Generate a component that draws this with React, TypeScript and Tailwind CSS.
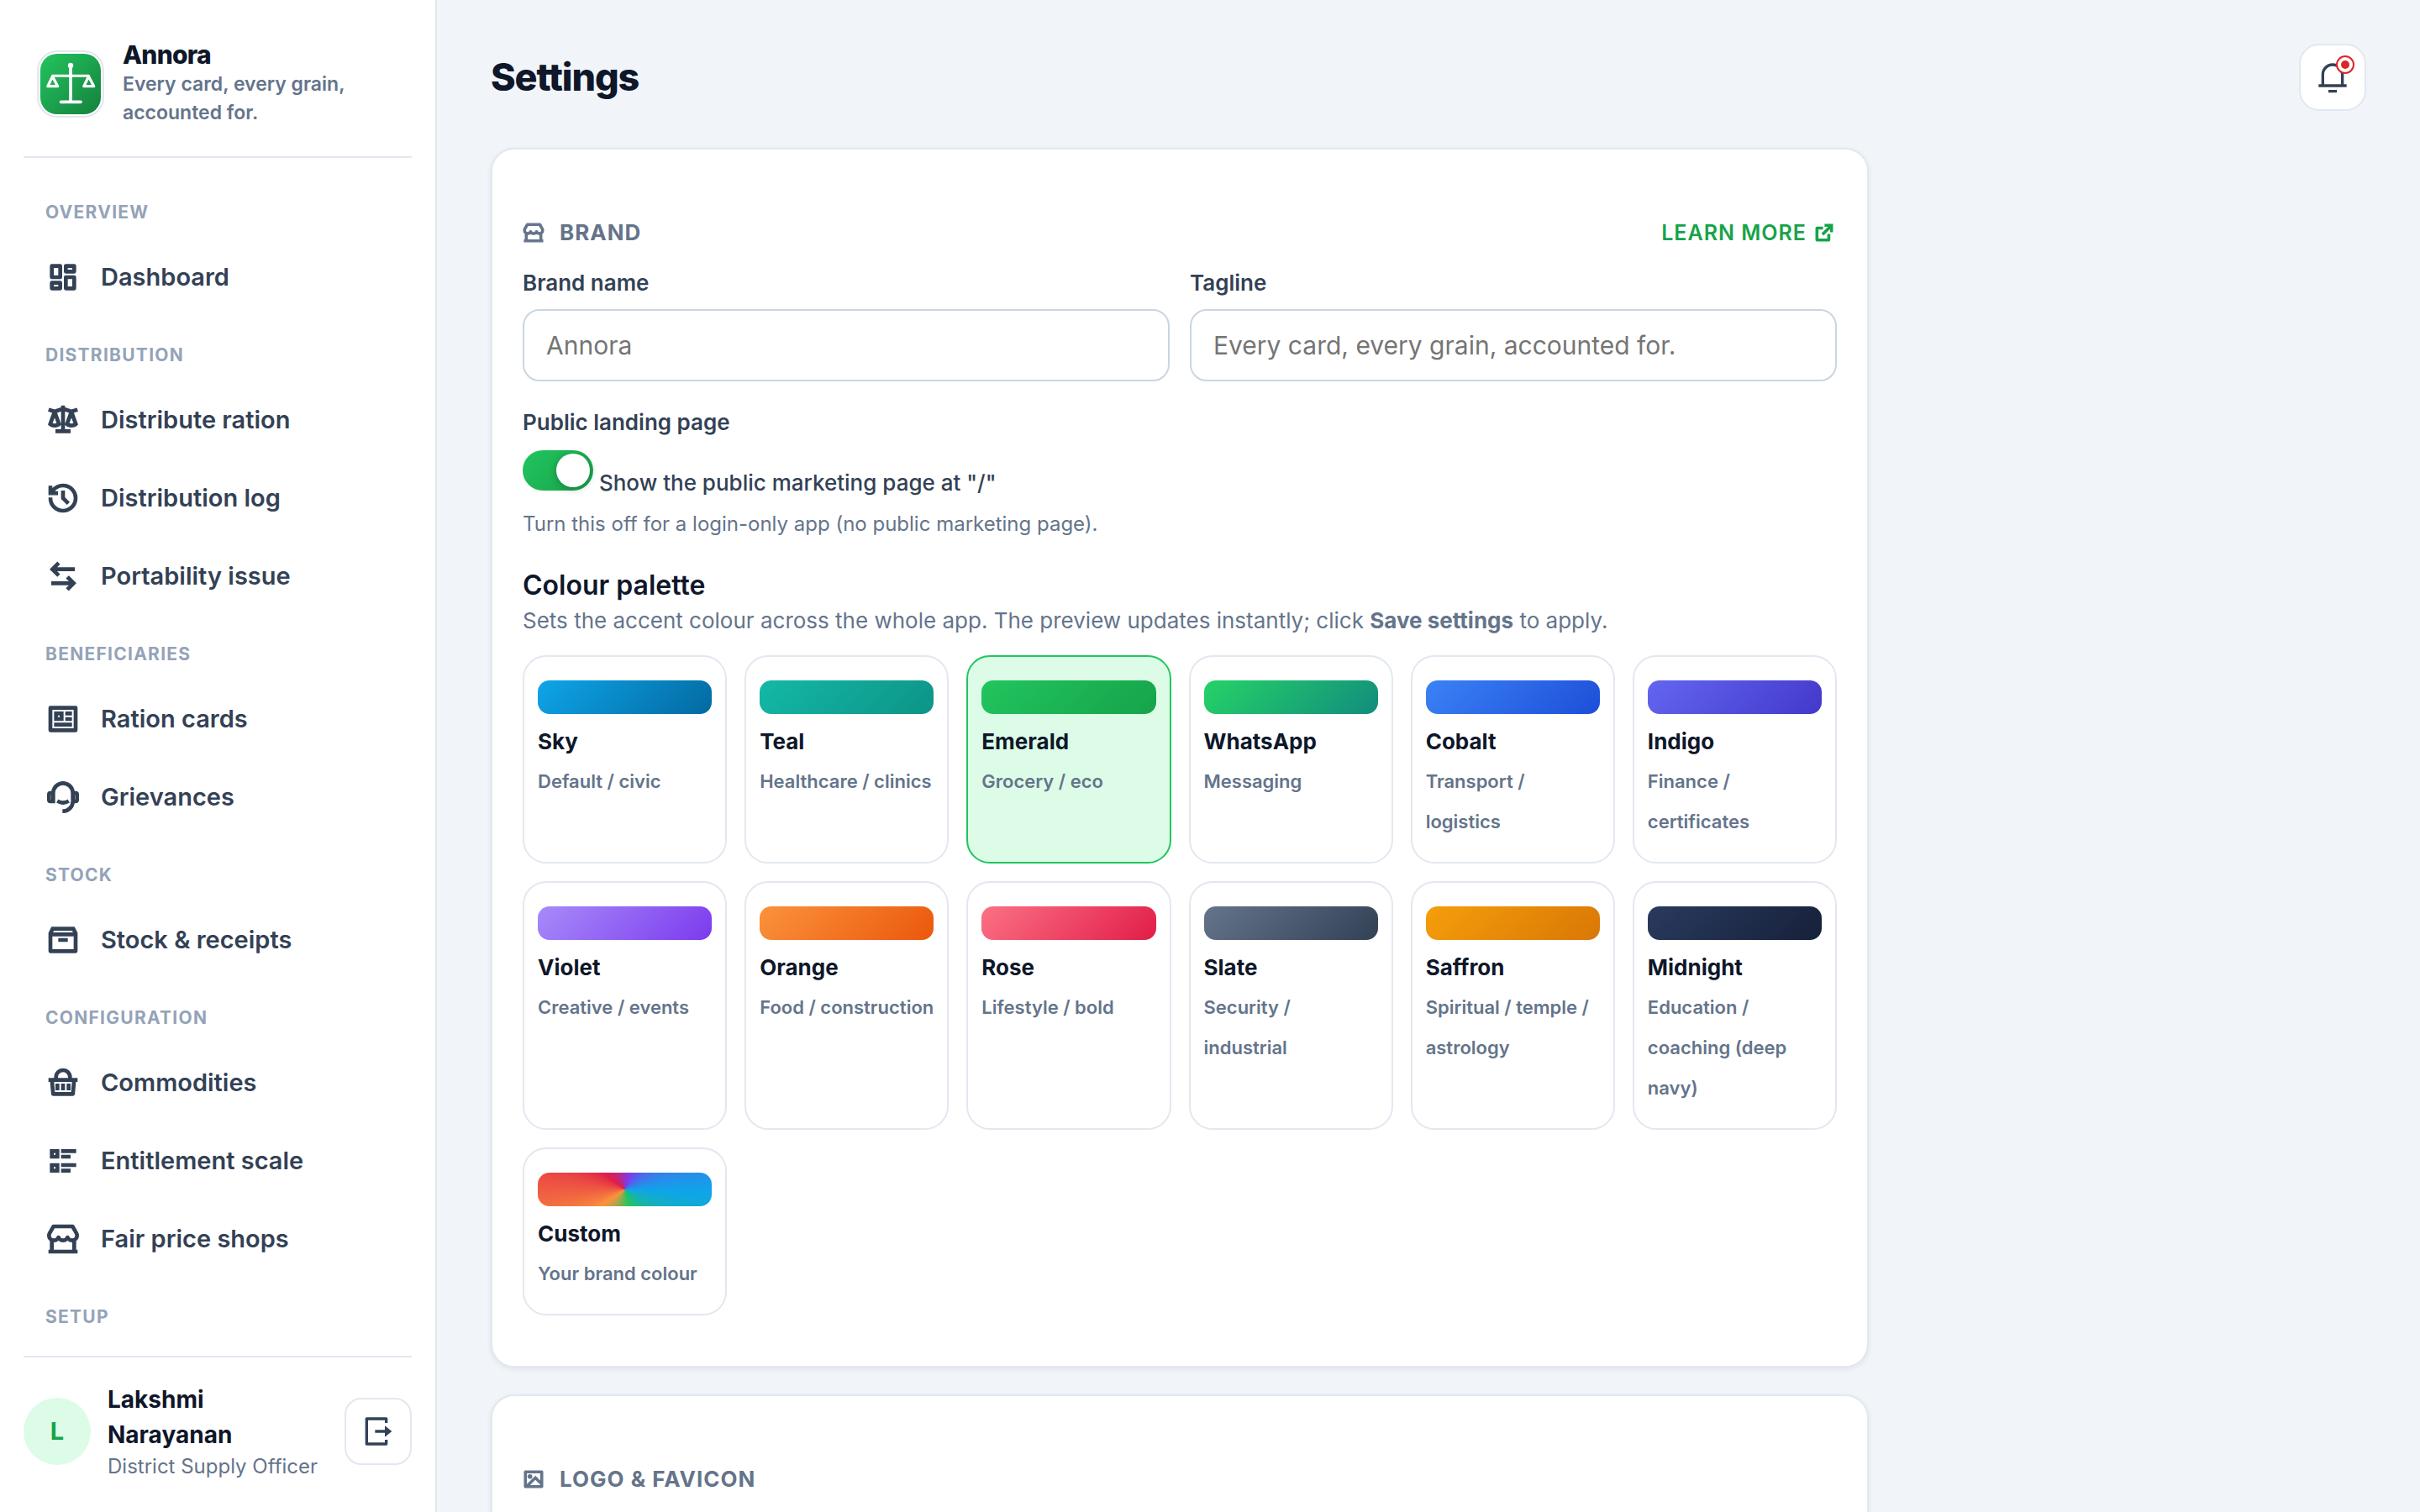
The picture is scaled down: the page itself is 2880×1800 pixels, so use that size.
import { useState } from 'react'
import type { ReactNode } from 'react'
import type { IconType } from 'react-icons'
import {
  RiArchive2Line,
  RiArrowLeftRightLine,
  RiCustomerService2Line,
  RiDashboardLine,
  RiExternalLinkLine,
  RiHistoryLine,
  RiImageLine,
  RiListCheck2,
  RiLogoutBoxRLine,
  RiNotification3Line,
  RiProfileLine,
  RiScales3Line,
  RiShoppingBasketLine,
  RiStore2Line,
} from 'react-icons/ri'
import { clsx } from 'clsx'

type NavItem = { label: string; icon: IconType }
type NavGroup = { title: string; items: NavItem[] }
type Palette = { name: string; hint: string; swatch: string }

const NAV: NavGroup[] = [
  { title: 'Overview', items: [{ label: 'Dashboard', icon: RiDashboardLine }] },
  {
    title: 'Distribution',
    items: [
      { label: 'Distribute ration', icon: RiScales3Line },
      { label: 'Distribution log', icon: RiHistoryLine },
      { label: 'Portability issue', icon: RiArrowLeftRightLine },
    ],
  },
  {
    title: 'Beneficiaries',
    items: [
      { label: 'Ration cards', icon: RiProfileLine },
      { label: 'Grievances', icon: RiCustomerService2Line },
    ],
  },
  { title: 'Stock', items: [{ label: 'Stock & receipts', icon: RiArchive2Line }] },
  {
    title: 'Configuration',
    items: [
      { label: 'Commodities', icon: RiShoppingBasketLine },
      { label: 'Entitlement scale', icon: RiListCheck2 },
      { label: 'Fair price shops', icon: RiStore2Line },
    ],
  },
  { title: 'Setup', items: [] },
]

const PALETTES: Palette[] = [
  { name: 'Sky', hint: 'Default / civic', swatch: 'bg-[linear-gradient(135deg,#0ea5e9,#0369a1)]' },
  { name: 'Teal', hint: 'Healthcare / clinics', swatch: 'bg-[linear-gradient(135deg,#14b8a6,#0d9488)]' },
  { name: 'Emerald', hint: 'Grocery / eco', swatch: 'bg-[linear-gradient(135deg,#22c55e,#16a34a)]' },
  { name: 'WhatsApp', hint: 'Messaging', swatch: 'bg-[linear-gradient(135deg,#25d366,#128c7e)]' },
  { name: 'Cobalt', hint: 'Transport / logistics', swatch: 'bg-[linear-gradient(135deg,#3b82f6,#1d4ed8)]' },
  { name: 'Indigo', hint: 'Finance / certificates', swatch: 'bg-[linear-gradient(135deg,#6366f1,#4338ca)]' },
  { name: 'Violet', hint: 'Creative / events', swatch: 'bg-[linear-gradient(135deg,#a78bfa,#7c3aed)]' },
  { name: 'Orange', hint: 'Food / construction', swatch: 'bg-[linear-gradient(135deg,#fb923c,#ea580c)]' },
  { name: 'Rose', hint: 'Lifestyle / bold', swatch: 'bg-[linear-gradient(135deg,#fb7185,#e11d48)]' },
  { name: 'Slate', hint: 'Security / industrial', swatch: 'bg-[linear-gradient(135deg,#64748b,#334155)]' },
  { name: 'Saffron', hint: 'Spiritual / temple / astrology', swatch: 'bg-[linear-gradient(135deg,#f59e0b,#d97706)]' },
  { name: 'Midnight', hint: 'Education / coaching (deep navy)', swatch: 'bg-[linear-gradient(135deg,#2a3a5e,#16213a)]' },
  {
    name: 'Custom',
    hint: 'Your brand colour',
    swatch: 'bg-[conic-gradient(from_20deg,#7c3aed,#0ea5e9,#22c55e,#fb923c,#e11d48,#7c3aed)]',
  },
]

function BrandLogo() {
  return (
    <span className="size-20 shrink-0 rounded-3xl border-2 border-[#e2e8f0] bg-white p-[2px]">
      <svg viewBox="0 0 72 72" className="size-full" aria-hidden="true">
        <defs>
          <linearGradient id="logo-bg" x1="0" y1="0" x2="1" y2="1">
            <stop offset="0" stopColor="#22c55e" />
            <stop offset="1" stopColor="#15803d" />
          </linearGradient>
        </defs>
        <rect width="72" height="72" rx="20" fill="url(#logo-bg)" />
        <g fill="none" stroke="#fff" strokeWidth="3" strokeLinecap="round" strokeLinejoin="round">
          <path d="M36 15v42M24.500 57.300h23.500" strokeWidth="3.700" />
          <path d="M14.500 26.300h43" />
          <path d="M14.500 27 8.800 38.700h11.900zM57.500 27l-5.700 11.700h11.900z" strokeWidth="3.300" />
        </g>
        <circle cx="36" cy="14" r="3.200" fill="#fff" />
      </svg>
    </span>
  )
}

function Sidebar() {
  return (
    <aside className="sticky top-0 flex h-screen w-[520px] shrink-0 flex-col border-r-2 border-[#e2e8f0] bg-white px-7">
      <div className="flex items-center gap-[22px] border-b-2 border-[#e2e8f0] px-4 pt-[47px] pb-[33px]">
        <BrandLogo />
        <div className="pb-[2px]">
          <p className="text-[30px] leading-9 font-extrabold tracking-tight text-[#0f172a]">Annora</p>
          <p className="text-[23px] leading-[34px] font-semibold text-[#64748b]">Every card, every grain, accounted for.</p>
        </div>
      </div>
      <nav className="min-h-0 flex-1 overflow-hidden pt-[18px]" aria-label="Main">
        {NAV.map((group) => (
          <div key={group.title}>
            <h2 className="px-[26px] pt-[30px] pb-[13px] text-[21px] leading-[34px] font-bold tracking-[0.06em] text-[#94a3b8] uppercase">
              {group.title}
            </h2>
            {group.items.map(({ label, icon: Icon }) => (
              <a
                key={label}
                href="#"
                className="flex h-[93px] items-center gap-[25px] px-[27px] text-[29px] font-semibold text-[#334155]"
              >
                <Icon className="size-10 stroke-[0.8]" aria-hidden="true" />
                {label}
              </a>
            ))}
          </div>
        ))}
      </nav>
      <div className="flex items-center gap-5 border-t-2 border-[#e2e8f0] pt-[29px] pb-[37px]">
        <span className="flex size-20 shrink-0 items-center justify-center rounded-full bg-[#dcfce7] text-[29px] font-bold text-[#16a34a]">
          L
        </span>
        <div className="min-w-0 flex-1">
          <p className="text-[28px] leading-[42px] font-bold text-[#0f172a]">Lakshmi Narayanan</p>
          <p className="text-[24px] leading-[34px] whitespace-nowrap text-[#64748b]">District Supply Officer</p>
        </div>
        <button
          type="button"
          aria-label="Sign out"
          className="flex size-20 shrink-0 items-center justify-center rounded-[20px] border-2 border-[#e2e8f0] bg-white pr-1 text-[#334155]"
        >
          <RiLogoutBoxRLine className="size-10" />
        </button>
      </div>
    </aside>
  )
}

function Card({ title, icon: Icon, action, children }: { title: string; icon: IconType; action?: ReactNode; children?: ReactNode }) {
  return (
    <section className="rounded-[28px] border-2 border-[#e2e8f0] bg-white px-9 pt-[78px] pb-[60px] shadow-[0_2px_6px_rgba(15,23,42,0.08)]">
      <div className="flex items-center justify-between">
        <h2 className="flex items-center gap-[18px] text-[26px] leading-[42px] font-bold tracking-[1px] text-[#64748b] uppercase">
          <Icon className="size-[26px] stroke-[1.3]" aria-hidden="true" />
          {title}
        </h2>
        {action}
      </div>
      {children}
    </section>
  )
}

function Field({ id, label, placeholder }: { id: string; label: string; placeholder: string }) {
  return (
    <div>
      <label htmlFor={id} className="mb-[11px] block text-[26px] leading-10 font-semibold text-[#334155]">
        {label}
      </label>
      <input
        id={id}
        type="text"
        placeholder={placeholder}
        className="h-[86px] w-full rounded-[20px] border-2 border-[#cbd5e1] bg-white px-[26px] text-[30px] text-[#0f172a] placeholder:text-[#757575]"
      />
    </div>
  )
}

function PaletteOption({ palette, active, onSelect }: { palette: Palette; active: boolean; onSelect: () => void }) {
  return (
    <button
      type="button"
      aria-pressed={active}
      onClick={onSelect}
      className={clsx(
        'flex flex-col items-stretch justify-start rounded-[28px] border-2 px-4 pt-7 pb-6 text-left',
        active ? 'border-[#22c55e] bg-[#dcfce7]' : 'border-[#e2e8f0] bg-white',
      )}
    >
      <span className={clsx('mb-[13px] h-10 rounded-[14px]', palette.swatch)} />
      <span className="text-[26px] leading-10 font-bold text-[#0f172a]">{palette.name}</span>
      <span className="mt-[3px] text-[22px] leading-[48px] font-semibold text-[#64748b]">{palette.hint}</span>
    </button>
  )
}

export default function App() {
  const [selected, setSelected] = useState('Emerald')
  const [publicPage, setPublicPage] = useState(true)

  return (
    <div className="flex h-screen overflow-hidden bg-[#f1f5f9] font-['Inter',sans-serif]">
      <Sidebar />
      <main className="min-w-0 flex-1 px-16 pt-[52px]">
        <header className="mb-11 flex h-20 items-center justify-between">
          <h1 className="text-[45px] leading-[56px] font-extrabold tracking-tight text-[#0f172a]">Settings</h1>
          <button
            type="button"
            aria-label="Notifications"
            className="relative flex size-20 items-center justify-center rounded-3xl border-2 border-[#e2e8f0] bg-white text-[#334155]"
          >
            <RiNotification3Line className="size-10" />
            <span className="absolute top-[12px] right-[12px] flex size-[22px] items-center justify-center rounded-full border-2 border-[#dc2626] bg-white">
              <span className="size-[10px] rounded-full bg-[#dc2626]" />
            </span>
          </button>
        </header>

        <div className="flex max-w-[1640px] flex-col gap-8">
          <Card
            title="Brand"
            icon={RiStore2Line}
            action={
              <a
                href="#"
                className="flex items-center gap-2 pr-[2px] text-[25px] leading-10 font-semibold tracking-[1px] text-[#16a34a] uppercase"
              >
                Learn more
                <RiExternalLinkLine className="size-[26px] stroke-[1.3]" aria-hidden="true" />
              </a>
            }
          >
            <div className="mt-[19px] grid grid-cols-2 gap-6">
              <Field id="brand-name" label="Brand name" placeholder="Annora" />
              <Field id="tagline" label="Tagline" placeholder="Every card, every grain, accounted for." />
            </div>

            <p className="mt-[29px] text-[26px] leading-10 font-semibold text-[#334155]">Public landing page</p>
            <label className="mt-[13px] block text-[26px] leading-10 font-medium text-[#334155]">
              <input
                type="checkbox"
                role="switch"
                checked={publicPage}
                onChange={(e) => setPublicPage(e.target.checked)}
                className="relative inline-block h-12 w-[84px] appearance-none rounded-full bg-[#cbd5e1] align-baseline before:absolute before:top-1 before:left-1 before:size-10 before:rounded-full before:bg-white before:shadow-[0_2px_8px_rgba(15,23,42,0.3)] checked:bg-[linear-gradient(135deg,#22c55e,#16a34a)] checked:before:left-10"
              />{' '}
              Show the public marketing page at "/"
            </label>
            <p className="mt-[11px] text-[24px] leading-9 text-[#64748b]">
              Turn this off for a login-only app (no public marketing page).
            </p>

            <h3 className="mt-[33px] text-[32px] leading-[44px] font-semibold text-[#0f172a]">Colour palette</h3>
            <p className="text-[26px] leading-10 text-[#64748b]">
              Sets the accent colour across the whole app. The preview updates instantly; click{' '}
              <strong className="font-bold">Save settings</strong> to apply.
            </p>
            <div className="mt-[21px] grid grid-cols-6 gap-[21px]">
              {PALETTES.map((palette) => (
                <PaletteOption
                  key={palette.name}
                  palette={palette}
                  active={palette.name === selected}
                  onSelect={() => setSelected(palette.name)}
                />
              ))}
            </div>
          </Card>

          <Card title="Logo & favicon" icon={RiImageLine} />
        </div>
      </main>
    </div>
  )
}
